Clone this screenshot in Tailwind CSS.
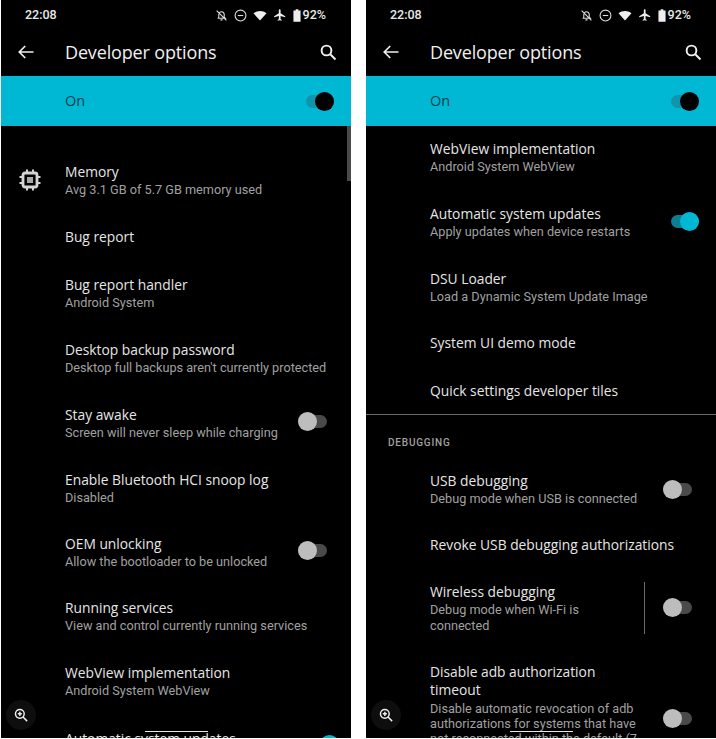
<!DOCTYPE html>
<html lang="en">
<head>
    <meta charset="UTF-8">
    <title>Developer options</title>
    <script src="https://cdn.jsdelivr.net/npm/@tailwindcss/browser@4"></script>
</head>
<body class="bg-white">
    <div class="flex pl-px gap-[15px] h-[738px] w-[716px] font-['Roboto',sans-serif]">

        <!-- left phone -->
        <div class="relative w-[350px] h-[738px] bg-black overflow-hidden shrink-0">
            <div class="flex items-center h-[30px] pl-[24px] pr-[25px] text-[#e8e8e8] text-[12.500px] font-medium">
                <span>22:08</span>
                <div class="ml-auto flex items-center gap-[6px]">
                    <svg class="w-[13px] h-[13px]" viewBox="0 0 24 24" fill="none" stroke="#ddd" stroke-width="2"><path d="M6 17l1-2v-5a5 5 0 0 1 8-4l2 3v6l2 2zM10 20h4M3 3l18 18"/></svg>
                    <svg class="w-[13px] h-[13px]" viewBox="0 0 24 24" fill="none" stroke="#ddd" stroke-width="2"><circle cx="12" cy="12" r="10"/><path d="M7 12h10"/></svg>
                    <svg class="w-[14px] h-[13px]" viewBox="0 0 24 24" fill="#eee"><path d="M12 21L0 8c7-6 17-6 24 0z"/></svg>
                    <svg class="w-[14px] h-[14px]" viewBox="0 0 24 24" fill="#eee"><path d="M21 16v-2l-8-5V3.500a1.500 1.500 0 0 0-3 0V9l-8 5v2l8-2.500V19l-2 1.500V22l3.500-1 3.500 1v-1.500L13 19v-5.500z"/></svg>
                    <div class="flex items-center gap-[2px]">
                        <svg class="w-[8px] h-[13px]" viewBox="0 0 9 14" fill="#eee"><path d="M3 0h3v1.500h2.500V14H.5V1.500H3z"/></svg>
                        <span>92%</span>
                    </div>
                </div>
            </div>
            <div class="flex items-center h-[46px] pb-[2px] pl-[16px] pr-[14px] text-[#f0f0f0]">
                <svg class="w-[18px] h-[18px]" viewBox="0 0 24 24" fill="none" stroke="#f0f0f0" stroke-width="2.200"><path d="M22 12H3M11 4l-8 8 8 8"/></svg>
                <span class="ml-[30px] text-[18px] font-['Open_Sans',sans-serif] tracking-[-0.15px]">Developer options</span>
                <svg class="ml-auto w-[18px] h-[18px]" viewBox="0 0 24 24" fill="none" stroke="#f0f0f0" stroke-width="2.600"><circle cx="10" cy="10" r="6.500"/><path d="M15 15l7 7"/></svg>
            </div>
            <div class="flex items-center h-[50px] pl-[64px] pr-[17px] bg-[#00b8d4]">
                <span class="text-[14.500px] text-[#033f4b] font-['Open_Sans',sans-serif]">On</span>
                <div class="ml-auto relative w-[28px] h-[13px] rounded-full bg-[#1095ab]">
                    <div class="absolute right-0 -top-[3px] w-[19px] h-[19px] rounded-full bg-black"></div>
                </div>
            </div>
            <div class="h-[22px]"></div>

            <div class="relative flex flex-col justify-center h-[65px] pl-[64px] pr-[17px]">
                <svg class="absolute left-[17px] top-[20px] w-[24px] h-[24px]" viewBox="0 0 24 24" fill="none" stroke="#d4d4d4" stroke-width="2"><rect x="5" y="5" width="14" height="14" rx="2" stroke-width="2.800"/><rect x="9" y="9" width="6" height="6" fill="#a8a8a8" stroke="none"/><path d="M9 1.500v3M15 1.500v3M9 19.500v3M15 19.500v3M1.500 9h3M1.500 15h3M19.500 9h3M19.500 15h3"/></svg>
                <div class="text-[13.800px] leading-[18px] text-[#e6e6e6] font-['Open_Sans',sans-serif]">Memory</div>
                <div class="text-[12.700px] leading-[18px] text-[#a0a0a0]">Avg 3.1 GB of 5.7 GB memory used</div>
            </div>
            <div class="flex items-center h-[48px] pl-[64px] text-[13.800px] text-[#e6e6e6] font-['Open_Sans',sans-serif]">Bug report</div>
            <div class="flex flex-col justify-center h-[65px] pl-[64px]">
                <div class="text-[13.800px] leading-[18px] text-[#e6e6e6] font-['Open_Sans',sans-serif]">Bug report handler</div>
                <div class="text-[12.700px] leading-[18px] text-[#a0a0a0]">Android System</div>
            </div>
            <div class="flex flex-col justify-center h-[65px] pl-[64px]">
                <div class="text-[13.800px] leading-[18px] text-[#e6e6e6] font-['Open_Sans',sans-serif]">Desktop backup password</div>
                <div class="text-[12.700px] leading-[18px] text-[#a0a0a0]">Desktop full backups aren't currently protected</div>
            </div>
            <div class="flex items-center h-[65px] pl-[64px] pr-[24px]">
                <div>
                    <div class="text-[13.800px] leading-[18px] text-[#e6e6e6] font-['Open_Sans',sans-serif]">Stay awake</div>
                    <div class="text-[12.700px] leading-[18px] text-[#a0a0a0]">Screen will never sleep while charging</div>
                </div>
                <div class="ml-auto -mt-[4px] relative w-[29px] h-[13px] rounded-full bg-[#4a4a4a]">
                    <div class="absolute left-0 -top-[3px] w-[19px] h-[19px] rounded-full bg-[#bdbdbd]"></div>
                </div>
            </div>
            <div class="flex flex-col justify-center h-[65px] pl-[64px]">
                <div class="text-[13.800px] leading-[18px] text-[#e6e6e6] font-['Open_Sans',sans-serif]">Enable Bluetooth HCI snoop log</div>
                <div class="text-[12.700px] leading-[18px] text-[#a0a0a0]">Disabled</div>
            </div>
            <div class="flex items-center h-[63px] pl-[64px] pr-[24px]">
                <div>
                    <div class="text-[13.800px] leading-[18px] text-[#e6e6e6] font-['Open_Sans',sans-serif]">OEM unlocking</div>
                    <div class="text-[12.700px] leading-[18px] text-[#a0a0a0]">Allow the bootloader to be unlocked</div>
                </div>
                <div class="ml-auto -mt-[4px] relative w-[29px] h-[13px] rounded-full bg-[#4a4a4a]">
                    <div class="absolute left-0 -top-[3px] w-[19px] h-[19px] rounded-full bg-[#bdbdbd]"></div>
                </div>
            </div>
            <div class="flex flex-col justify-center h-[65px] pl-[64px]">
                <div class="text-[13.800px] leading-[18px] text-[#e6e6e6] font-['Open_Sans',sans-serif]">Running services</div>
                <div class="text-[12.700px] leading-[18px] text-[#a0a0a0]">View and control currently running services</div>
            </div>
            <div class="flex flex-col justify-center h-[65px] pl-[64px]">
                <div class="text-[13.800px] leading-[18px] text-[#e6e6e6] font-['Open_Sans',sans-serif]">WebView implementation</div>
                <div class="text-[12.700px] leading-[18px] text-[#a0a0a0]">Android System WebView</div>
            </div>
            <div class="h-[65px] pl-[64px] pt-[16px]">
                <div class="text-[13.800px] leading-[18px] text-[#e6e6e6] font-['Open_Sans',sans-serif]">Automatic system updates</div>
            </div>

            <!-- overlays -->
            <div class="absolute right-0 top-[126px] w-[4px] h-[55px] bg-[#4a4a4a]"></div>
            <div class="absolute left-[144px] top-[731px] w-[63px] h-px bg-[#e8e8e8]"></div>
            <div class="absolute left-[5px] top-[700px] w-[30px] h-[30px] rounded-full bg-[#0e0e0e] flex items-center justify-center">
                <svg class="w-[14px] h-[14px]" viewBox="0 0 24 24" fill="none" stroke="#eee" stroke-width="2.500"><circle cx="10" cy="10" r="7.500"/><path d="M15.500 15.500l7 7M10 6.500v7M6.500 10h7"/></svg>
            </div>
            <div class="absolute right-[12px] top-[735px] w-[19px] h-[19px] rounded-full bg-[#00b8d4]"></div>
        </div>

        <!-- right phone -->
        <div class="relative w-[350px] h-[738px] bg-black overflow-hidden shrink-0">
            <div class="flex items-center h-[30px] pl-[24px] pr-[25px] text-[#e8e8e8] text-[12.500px] font-medium">
                <span>22:08</span>
                <div class="ml-auto flex items-center gap-[6px]">
                    <svg class="w-[13px] h-[13px]" viewBox="0 0 24 24" fill="none" stroke="#ddd" stroke-width="2"><path d="M6 17l1-2v-5a5 5 0 0 1 8-4l2 3v6l2 2zM10 20h4M3 3l18 18"/></svg>
                    <svg class="w-[13px] h-[13px]" viewBox="0 0 24 24" fill="none" stroke="#ddd" stroke-width="2"><circle cx="12" cy="12" r="10"/><path d="M7 12h10"/></svg>
                    <svg class="w-[14px] h-[13px]" viewBox="0 0 24 24" fill="#eee"><path d="M12 21L0 8c7-6 17-6 24 0z"/></svg>
                    <svg class="w-[14px] h-[14px]" viewBox="0 0 24 24" fill="#eee"><path d="M21 16v-2l-8-5V3.500a1.500 1.500 0 0 0-3 0V9l-8 5v2l8-2.500V19l-2 1.500V22l3.500-1 3.500 1v-1.500L13 19v-5.500z"/></svg>
                    <div class="flex items-center gap-[2px]">
                        <svg class="w-[8px] h-[13px]" viewBox="0 0 9 14" fill="#eee"><path d="M3 0h3v1.500h2.500V14H.5V1.500H3z"/></svg>
                        <span>92%</span>
                    </div>
                </div>
            </div>
            <div class="flex items-center h-[46px] pb-[2px] pl-[16px] pr-[14px] text-[#f0f0f0]">
                <svg class="w-[18px] h-[18px]" viewBox="0 0 24 24" fill="none" stroke="#f0f0f0" stroke-width="2.200"><path d="M22 12H3M11 4l-8 8 8 8"/></svg>
                <span class="ml-[30px] text-[18px] font-['Open_Sans',sans-serif] tracking-[-0.15px]">Developer options</span>
                <svg class="ml-auto w-[18px] h-[18px]" viewBox="0 0 24 24" fill="none" stroke="#f0f0f0" stroke-width="2.600"><circle cx="10" cy="10" r="6.500"/><path d="M15 15l7 7"/></svg>
            </div>
            <div class="flex items-center h-[50px] pl-[64px] pr-[17px] bg-[#00b8d4]">
                <span class="text-[14.500px] text-[#033f4b] font-['Open_Sans',sans-serif]">On</span>
                <div class="ml-auto relative w-[28px] h-[13px] rounded-full bg-[#1095ab]">
                    <div class="absolute right-0 -top-[3px] w-[19px] h-[19px] rounded-full bg-black"></div>
                </div>
            </div>

            <div class="flex flex-col justify-center h-[64px] pl-[64px]">
                <div class="text-[13.800px] leading-[18px] text-[#e6e6e6] font-['Open_Sans',sans-serif]">WebView implementation</div>
                <div class="text-[12.700px] leading-[18px] text-[#a0a0a0]">Android System WebView</div>
            </div>
            <div class="flex items-center h-[65px] pl-[64px] pr-[17px]">
                <div>
                    <div class="text-[13.800px] leading-[18px] text-[#e6e6e6] font-['Open_Sans',sans-serif]">Automatic system updates</div>
                    <div class="text-[12.700px] leading-[18px] text-[#a0a0a0]">Apply updates when device restarts</div>
                </div>
                <div class="ml-auto -mt-[3px] relative w-[28px] h-[13px] rounded-full bg-[#0a7f93]">
                    <div class="absolute right-0 -top-[3px] w-[19px] h-[19px] rounded-full bg-[#00b8d4]"></div>
                </div>
            </div>
            <div class="flex flex-col justify-center h-[64px] pt-[2px] pl-[64px]">
                <div class="text-[13.800px] leading-[18px] text-[#e6e6e6] font-['Open_Sans',sans-serif]">DSU Loader</div>
                <div class="text-[12.700px] leading-[18px] text-[#a0a0a0]">Load a Dynamic System Update Image</div>
            </div>
            <div class="flex items-center h-[48px] pl-[64px] text-[13.800px] text-[#e6e6e6] font-['Open_Sans',sans-serif]">System UI demo mode</div>
            <div class="flex items-center h-[47px] pt-[2px] pl-[64px] text-[13.800px] text-[#e6e6e6] font-['Open_Sans',sans-serif]">Quick settings developer tiles</div>
            <div class="border-t border-[#6a6a6a] h-[48px] pl-[22px] pt-[22px] text-[10px] leading-[12px] font-medium tracking-[0.8px] text-[#a0a0a0]">DEBUGGING</div>
            <div class="flex items-center h-[59px] pb-[4px] pl-[64px] pr-[24px]">
                <div>
                    <div class="text-[13.800px] leading-[18px] text-[#e6e6e6] font-['Open_Sans',sans-serif]">USB debugging</div>
                    <div class="text-[12.700px] leading-[18px] text-[#a0a0a0]">Debug mode when USB is connected</div>
                </div>
                <div class="ml-auto -mt-px relative w-[29px] h-[13px] rounded-full bg-[#4a4a4a]">
                    <div class="absolute left-0 -top-[3px] w-[19px] h-[19px] rounded-full bg-[#bdbdbd]"></div>
                </div>
            </div>
            <div class="flex items-center h-[48px] pl-[64px] text-[13.800px] text-[#e6e6e6] font-['Open_Sans',sans-serif]">Revoke USB debugging authorizations</div>
            <div class="flex items-center h-[78px] pl-[64px] pr-[24px]">
                <div class="w-[200px]">
                    <div class="text-[13.800px] leading-[18px] text-[#e6e6e6] font-['Open_Sans',sans-serif]">Wireless debugging</div>
                    <div class="text-[12.700px] leading-[16px] mt-px text-[#a0a0a0]">Debug mode when Wi-Fi is connected</div>
                </div>
                <div class="w-px h-[52px] bg-[#6a6a6a] ml-auto mr-[18px]"></div>
                <div class="-mt-[2px] relative w-[29px] h-[13px] rounded-full bg-[#4a4a4a]">
                    <div class="absolute left-0 -top-[3px] w-[19px] h-[19px] rounded-full bg-[#bdbdbd]"></div>
                </div>
            </div>
            <div class="flex items-start h-[110px] pl-[64px] pr-[24px] pt-[16px]">
                <div class="w-[225px]">
                    <div class="w-[180px] text-[13.800px] leading-[18px] text-[#e6e6e6] font-['Open_Sans',sans-serif]">Disable adb authorization timeout</div>
                    <div class="text-[12.700px] leading-[15px] mt-[2px] text-[#a0a0a0]">Disable automatic revocation of adb authorizations for systems that have not reconnected within the default (7 days)</div>
                </div>
                <div class="ml-auto mt-[49px] relative w-[29px] h-[13px] rounded-full bg-[#4a4a4a]">
                    <div class="absolute left-0 -top-[3px] w-[19px] h-[19px] rounded-full bg-[#bdbdbd]"></div>
                </div>
            </div>

            <!-- overlays -->
            <div class="absolute left-[144px] top-[731px] w-[63px] h-px bg-[#e8e8e8]"></div>
            <div class="absolute left-[5px] top-[700px] w-[30px] h-[30px] rounded-full bg-[#0e0e0e] flex items-center justify-center">
                <svg class="w-[14px] h-[14px]" viewBox="0 0 24 24" fill="none" stroke="#eee" stroke-width="2.500"><circle cx="10" cy="10" r="7.500"/><path d="M15.500 15.500l7 7M10 6.500v7M6.500 10h7"/></svg>
            </div>
        </div>
    </div>
</body>
</html>
